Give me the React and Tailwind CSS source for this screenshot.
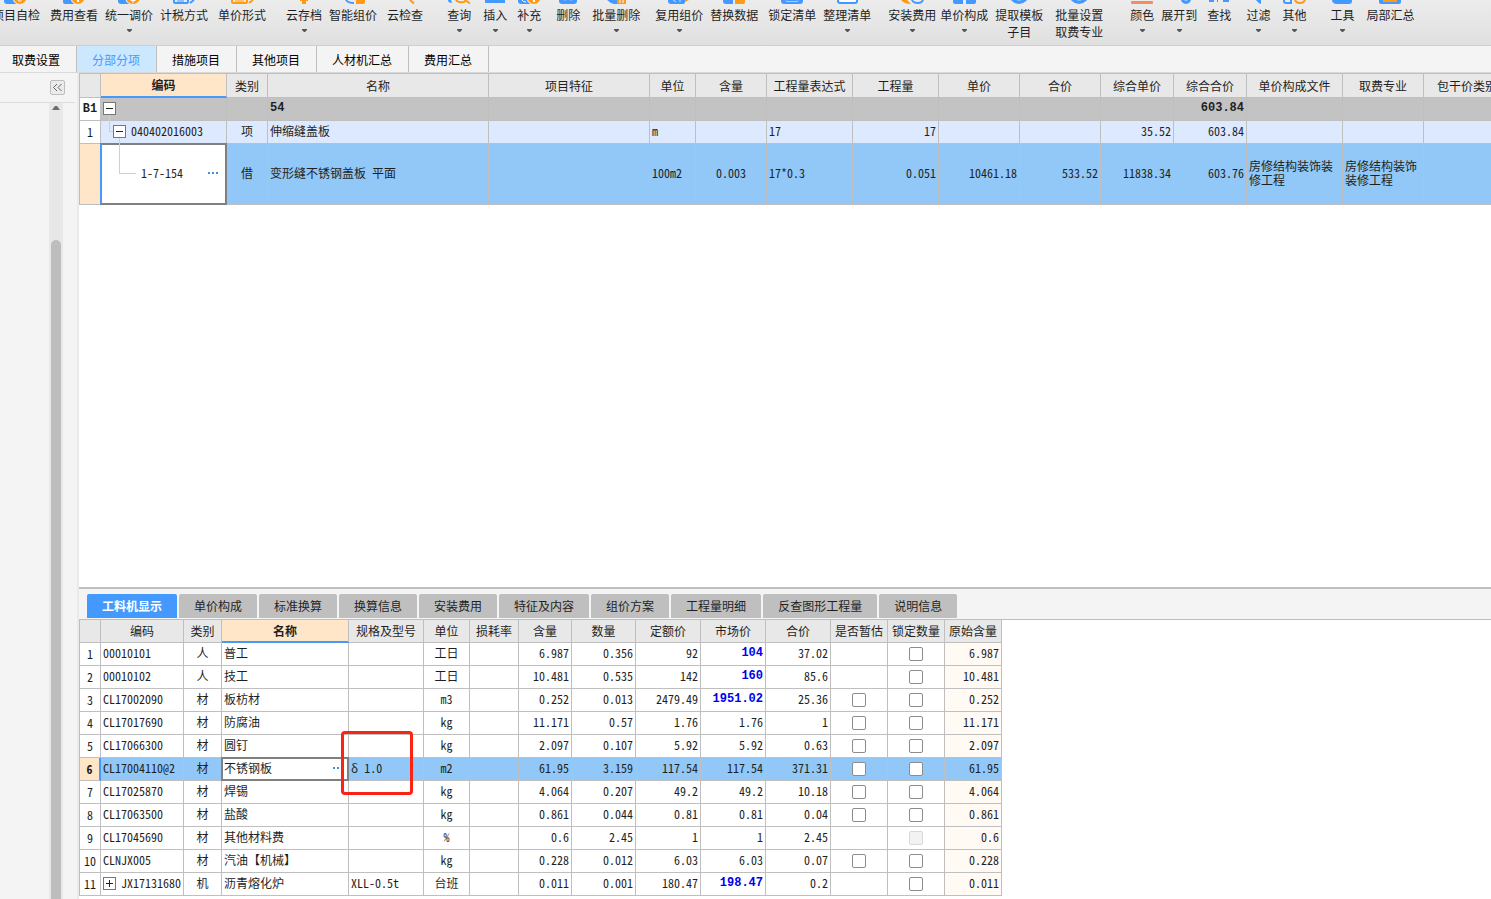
import React, { useState } from "react";
import clsx from "clsx";

const BLUE = "#4499ff";
const ORANGE = "#ff9a16";

const icons = {
  selfCheck: (
    <>
      <path d="M4 0h13v4H7q-3 0-3-3z" fill={BLUE} />
      <circle cx="20" cy="-2.5" r="7.5" fill="#ebebeb" />
      <circle cx="20" cy="-2.5" r="6.5" fill={ORANGE} />
      <path d="M18 0l2 1.5 3-3" stroke="#fff" fill="none" />
    </>
  ),
  feeView: (
    <>
      <path d="M5 0h13v4H7q-2 0-2-2z" fill={BLUE} />
      <circle cx="20" cy="-2.5" r="7.5" fill="#ebebeb" />
      <circle cx="20" cy="-2.5" r="6.5" fill={ORANGE} />
      <path d="M20 0v2" stroke="#fff" strokeWidth="2" />
    </>
  ),
  adjust: (
    <>
      <path d="M5 0h13v4H8q-3 0-3-3z" fill={BLUE} />
      <circle cx="20" cy="-3" r="8" fill="#ebebeb" />
      <circle cx="20" cy="-3" r="7" fill={ORANGE} />
      <path d="M17.5 0.5h5M20 0v3" stroke="#fff" />
    </>
  ),
  tax: (
    <>
      <path d="M6 0v2q0 1 1 1h12q1 0 1-1V0" stroke={BLUE} strokeWidth="2" fill="#dcebff" />
      <path d="M22 3l4-3" stroke={BLUE} strokeWidth="2" />
      <path d="M9 1h7" stroke={BLUE} />
    </>
  ),
  priceForm: (
    <>
      <path d="M6 0v2q0 1 1 1h13q1 0 1-1V0" stroke={ORANGE} strokeWidth="2" fill="#ffe7c6" />
      <path d="M23 3l4-3" stroke={ORANGE} strokeWidth="2" />
      <path d="M9 1h9" stroke={ORANGE} />
    </>
  ),
  cloudSave: <path d="M12 0h8v1h-2v3h-4V1h-2z" fill={ORANGE} />,
  smart: (
    <>
      <path d="M9 0q2 3 8 3" stroke={BLUE} strokeWidth="2" fill="none" />
      <path d="M19 0h9v2q0 2-2 2h-7z" fill={ORANGE} />
    </>
  ),
  cloudCheck: <path d="M21 0l4 3.500" stroke={ORANGE} strokeWidth="2" />,
  query: (
    <>
      <path d="M5 0h3l1 3q-4 0-4-3z" fill={BLUE} />
      <path d="M13 0q2 3 8 2l2-2M22 0l5 3.500" stroke={ORANGE} strokeWidth="2" fill="none" />
    </>
  ),
  insert: <path d="M6 0h20v3H6z" fill={BLUE} />,
  supplement: (
    <>
      <path d="M5 0h14v4H8q-3 0-3-3z" fill={BLUE} />
      <path d="M9 0q1 2 4 2" stroke="#fff" fill="none" />
      <circle cx="21" cy="-2.5" r="7.5" fill="#ebebeb" />
      <circle cx="21" cy="-2.5" r="6.5" fill={ORANGE} />
      <path d="M21 0v2" stroke="#fff" strokeWidth="2" />
    </>
  ),
  remove: (
    <>
      <path d="M7 0h18v1q0 3-3 3H10q-3 0-3-3z" fill={BLUE} />
      <path d="M13 0v1M19 0v1" stroke="#a9d0ff" />
    </>
  ),
  batchRemove: (
    <>
      <path d="M7 0h10v4h-3q-4-1-7-4z" fill={BLUE} />
      <path d="M17 0h9v4h-9z" fill={ORANGE} />
      <path d="M20 0v3M23 0v3" stroke="#fff" />
    </>
  ),
  reuse: (
    <>
      <path d="M5 0h17v2q0 2-2 2H8q-3 0-3-3z" fill={BLUE} />
      <path d="M10 0l3 2M17 0v2" stroke="#bcdcff" />
      <path d="M22 0h4l-4 2z" fill={ORANGE} />
    </>
  ),
  replace: (
    <>
      <path d="M5 0h10v4H8q-3 0-3-3z" fill={BLUE} />
      <path d="M17 0h10v2q0 2-2 2h-8z" fill={ORANGE} />
    </>
  ),
  lock: (
    <>
      <path d="M5 0h22v1q0 3-3 3H8q-3 0-3-3z" fill={BLUE} />
      <path d="M10 0.500q0 1 1 1h10q1 0 1-1" stroke="#a9d0ff" fill="none" />
    </>
  ),
  tidy: <path d="M7 0v1q0 2 2 2h15q2 0 2-2V0" stroke={BLUE} strokeWidth="2" fill="#fff" />,
  install: (
    <>
      <path d="M5 0h6l4 4q-7 0-10-4z" fill={ORANGE} />
      <path d="M16 0q1 3 6 3 4 0 5-3" stroke={BLUE} strokeWidth="2" fill="none" />
    </>
  ),
  compose: (
    <>
      <path d="M5 0h10v4H7q-2 0-2-2z" fill={BLUE} />
      <path d="M18 0h10v2q0 2-2 2h-8z" fill={BLUE} />
    </>
  ),
  disc: (
    <>
      <circle cx="16" cy="-6" r="10" fill={BLUE} />
      <path d="M14 0.500h4" stroke="#7db8ff" fill="none" />
    </>
  ),
  color: <rect x="5" y="1" width="22" height="3" rx="1" fill="#f58a63" />,
  expand: (
    <>
      <circle cx="23" cy="-1" r="5" fill={BLUE} />
      <circle cx="23" cy="-1" r="2" fill="#9ccaff" />
    </>
  ),
  find: <path d="M6 0h5v2H6zM14 0h1v2h-1zM20 0h6v2h-6z" fill={BLUE} />,
  filter: <path d="M14 0h5v4q-3-1-5-4z" fill={BLUE} />,
  other: (
    <>
      <path d="M6 0v1q0 2 2 2h5V0" stroke={BLUE} strokeWidth="2" fill="none" />
      <path d="M17 0q1 3 5 3t5-3" stroke={ORANGE} strokeWidth="2" fill="none" />
    </>
  ),
  tools: <path d="M6 0h20v1q0 3-3 3H10q-4-1-4-4z" fill={BLUE} />,
  partial: (
    <>
      <path d="M5 0h22v2q0 2-2 2H7q-2 0-2-2z" fill={BLUE} />
      <path d="M9 0h14v2H9z" fill={ORANGE} />
    </>
  ),
};

const tools = [
  { text: "项目自检", icon: "selfCheck", gap: "-ml-2" },
  { text: "费用查看", icon: "feeView", gap: "ml-[10px]" },
  { text: "统一调价", icon: "adjust", gap: "ml-[7px]", menu: true },
  { text: "计税方式", icon: "tax", gap: "ml-[7px]" },
  { text: "单价形式", icon: "priceForm", gap: "ml-[10px]" },
  { text: "云存档", icon: "cloudSave", gap: "ml-5", menu: true },
  { text: "智能组价", icon: "smart", gap: "ml-[7px]" },
  { text: "云检查", icon: "cloudCheck", gap: "ml-[10px]" },
  { text: "查询", icon: "query", gap: "ml-6", menu: true },
  { text: "插入", icon: "insert", gap: "ml-3", menu: true },
  { text: "补充", icon: "supplement", gap: "ml-[10px]", menu: true },
  { text: "删除", icon: "remove", gap: "ml-[15px]" },
  { text: "批量删除", icon: "batchRemove", gap: "ml-3", menu: true },
  { text: "复用组价", icon: "reuse", gap: "ml-[15px]", menu: true },
  { text: "替换数据", icon: "replace", gap: "ml-[7px]" },
  { text: "锁定清单", icon: "lock", gap: "ml-[10px]" },
  { text: "整理清单", icon: "tidy", gap: "ml-[7px]", menu: true },
  { text: "安装费用", icon: "install", gap: "ml-[17px]", menu: true },
  { text: "单价构成", icon: "compose", gap: "ml-1", menu: true },
  { text: "提取模板", second: "子目", icon: "disc", gap: "ml-[7px]" },
  { text: "批量设置", second: "取费专业", icon: "disc", gap: "ml-3" },
  { text: "颜色", icon: "color", gap: "ml-[27px]", menu: true },
  { text: "展开到", icon: "expand", gap: "ml-[7px]", menu: true },
  { text: "查找", icon: "find", gap: "ml-[10px]" },
  { text: "过滤", icon: "filter", gap: "ml-[15px]", menu: true },
  { text: "其他", icon: "other", gap: "ml-3", menu: true },
  { text: "工具", icon: "tools", gap: "ml-6", menu: true },
  { text: "局部汇总", icon: "partial", gap: "ml-3" },
];

const pageTabs = ["分部分项", "措施项目", "其他项目", "人材机汇总", "费用汇总"];

const topCols = [
  { title: "", w: "w-[21px]" },
  { title: "编码", w: "w-[126px]" },
  { title: "类别", w: "w-[41px]", align: "text-center" },
  { title: "名称", w: "w-[221px]" },
  { title: "项目特征", w: "w-[161px]" },
  { title: "单位", w: "w-[46px]" },
  { title: "含量", w: "w-[71px]", align: "text-center" },
  { title: "工程量表达式", w: "w-[86px]" },
  { title: "工程量", w: "w-[86px]", align: "text-right" },
  { title: "单价", w: "w-[81px]", align: "text-right" },
  { title: "合价", w: "w-[81px]", align: "text-right" },
  { title: "综合单价", w: "w-[73px]", align: "text-right" },
  { title: "综合合价", w: "w-[73px]", align: "text-right" },
  { title: "单价构成文件", w: "w-[96px]" },
  { title: "取费专业", w: "w-[81px]" },
  { title: "包干价类别", w: "w-[87px]" },
];

const topRows = [
  ["", "54", "", "", "", "", "", "", "", "", "603.84", "", "", ""],
  ["项", "伸缩缝盖板", "", "m", "", "17", "17", "", "", "35.52", "603.84", "", "", ""],
  ["借", "变形缝不锈钢盖板 平面", "", "100m2", "0.003", "17*0.3", "0.051", "10461.18", "533.52", "11838.34", "603.76", "房修结构装饰装修工程", "房修结构装饰装修工程", ""],
];

const detailTabs = ["工料机显示", "单价构成", "标准换算", "换算信息", "安装费用", "特征及内容", "组价方案", "工程量明细", "反查图形工程量", "说明信息"];

const detailCols = [
  { title: "", w: "w-[21px]" },
  { title: "编码", w: "w-[83px]" },
  { title: "类别", w: "w-[38px]" },
  { title: "名称", w: "w-[127px]" },
  { title: "规格及型号", w: "w-[75px]" },
  { title: "单位", w: "w-[46px]" },
  { title: "损耗率", w: "w-[49px]" },
  { title: "含量", w: "w-[53px]" },
  { title: "数量", w: "w-[64px]" },
  { title: "定额价", w: "w-[65px]" },
  { title: "市场价", w: "w-[65px]" },
  { title: "合价", w: "w-[65px]" },
  { title: "是否暂估", w: "w-[57px]" },
  { title: "锁定数量", w: "w-[57px]" },
  { title: "原始含量", w: "w-[57px]" },
];

const details = [
  { code: "00010101", type: "人", name: "普工", unit: "工日", amount: "6.987", qty: "0.356", quota: "92", market: "104", total: "37.02", changed: true },
  { code: "00010102", type: "人", name: "技工", unit: "工日", amount: "10.481", qty: "0.535", quota: "142", market: "160", total: "85.6", changed: true },
  { code: "CL17002090", type: "材", name: "板枋材", unit: "m3", amount: "0.252", qty: "0.013", quota: "2479.49", market: "1951.02", total: "25.36", changed: true, estimate: true },
  { code: "CL17017690", type: "材", name: "防腐油", unit: "kg", amount: "11.171", qty: "0.57", quota: "1.76", market: "1.76", total: "1", estimate: true },
  { code: "CL17066300", type: "材", name: "圆钉", unit: "kg", amount: "2.097", qty: "0.107", quota: "5.92", market: "5.92", total: "0.63", estimate: true },
  { code: "CL17004110@2", type: "材", name: "不锈钢板", spec: "δ 1.0", unit: "m2", amount: "61.95", qty: "3.159", quota: "117.54", market: "117.54", total: "371.31", estimate: true, selected: true },
  { code: "CL17025870", type: "材", name: "焊锡", unit: "kg", amount: "4.064", qty: "0.207", quota: "49.2", market: "49.2", total: "10.18", estimate: true },
  { code: "CL17063500", type: "材", name: "盐酸", unit: "kg", amount: "0.861", qty: "0.044", quota: "0.81", market: "0.81", total: "0.04", estimate: true },
  { code: "CL17045690", type: "材", name: "其他材料费", unit: "%", amount: "0.6", qty: "2.45", quota: "1", market: "1", total: "2.45", lockDisabled: true },
  { code: "CLNJX005", type: "材", name: "汽油【机械】", unit: "kg", amount: "0.228", qty: "0.012", quota: "6.03", market: "6.03", total: "0.07", estimate: true },
  { code: "JX17131680", type: "机", name: "沥青熔化炉", spec: "XLL-0.5t", unit: "台班", amount: "0.011", qty: "0.001", quota: "180.47", market: "198.47", total: "0.2", changed: true, expandable: true },
];

const cell = "border-r border-b border-[#bfbfbf] px-0.5 pb-0.5";
const boldNum = "font-['Liberation_Mono','Noto_Sans_CJK_SC',monospace] font-bold";

function Tool({ tool }) {
  return (
    <button className={clsx("flex shrink-0 flex-col items-center whitespace-nowrap", tool.gap)}>
      <svg width="32" height="6" viewBox="0 0 32 6" className="-mx-1 overflow-hidden">
        {icons[tool.icon]}
      </svg>
      <span className="leading-[17px]">{tool.text}</span>
      {tool.second && <span className="leading-[17px]">{tool.second}</span>}
      {tool.menu && (
        <svg width="5" height="3" viewBox="0 0 5 3" className="mt-1.5">
          <path d="M0 0h5v1L3 3H2L0 1z" fill="#555" />
        </svg>
      )}
    </button>
  );
}

function TreeBox({ open, label }) {
  return (
    <button aria-label={label} className="relative flex size-[13px] shrink-0 items-center justify-center border border-[#777] bg-white">
      <svg width="9" height="9" viewBox="0 0 9 9">
        <path d={open ? "M1 4.500h7" : "M1 4.500h7M4.500 1v7"} stroke="#222" />
      </svg>
    </button>
  );
}

function Dots({ label }) {
  return (
    <button aria-label={label} className="flex shrink-0 gap-0.5">
      <span className="size-0.5 bg-[#3f8fdc]"></span>
      <span className="size-0.5 bg-[#3f8fdc]"></span>
      <span className="size-0.5 bg-[#3f8fdc]"></span>
    </button>
  );
}

function EditFrame() {
  return <span className="pointer-events-none absolute -inset-px border-2 border-[#808080] border-l-[#4499ff]"></span>;
}

function HeadRow({ cols, active, height }) {
  return (
    <tr className={height}>
      {cols.map((c, i) => (
        <th
          key={i}
          scope="col"
          className={clsx(
            "overflow-hidden border-r border-b border-[#bfbfbf] whitespace-nowrap",
            c.w,
            c.title === active ? "border-b-2 border-b-[#4499ff] bg-[#ffe6c8] font-bold" : "bg-[#e8e8e8] font-normal"
          )}
        >
          {c.title}
        </th>
      ))}
    </tr>
  );
}

function CheckCell({ label, show, disabled }) {
  return (
    <td className="border-r border-b border-[#bfbfbf]">
      {show && (
        <input
          type="checkbox"
          aria-label={label}
          disabled={disabled}
          className="mx-auto block size-3.5 appearance-none rounded-xs border border-[#8c8c8c] bg-white checked:bg-[#4499ff] disabled:border-[#d8d8d8] disabled:bg-[#f2f2f2]"
        />
      )}
    </td>
  );
}

function BudgetTable() {
  const [code, setCode] = useState("1-7-154");

  function renderCells(row) {
    return row.map((v, i) => (
      <td key={i} className={clsx(cell, topCols[i + 2].align)}>
        {v}
      </td>
    ));
  }

  return (
    <table className="w-[1432px] table-fixed border-separate border-spacing-0 border-t border-l border-[#bfbfbf]">
      <thead>
        <HeadRow cols={topCols} active="编码" height="h-6" />
      </thead>
      <tbody>
        <tr className={clsx("h-[23px] bg-[#c3c3c3]", boldNum)}>
          <th scope="row" className="border-r border-b border-[#bfbfbf] bg-white text-center">B1</th>
          <td className={cell}>
            <TreeBox open label="收起 B1" />
          </td>
          {renderCells(topRows[0])}
        </tr>
        <tr className="h-[23px] bg-[#dce9ff]">
          <th scope="row" className="border-r border-b border-[#bfbfbf] bg-white font-normal">1</th>
          <td className={clsx(cell, "relative")}>
            <span className="absolute -top-1.5 left-2 h-[17px] w-1 border-b border-l border-[#f7c88c]"></span>
            <div className="flex items-center gap-[5px] pl-[10px]">
              <TreeBox open label="收起 040402016003" />
              <span>040402016003</span>
            </div>
          </td>
          {renderCells(topRows[1])}
        </tr>
        <tr className="h-[61px] bg-[#92c8f7] leading-[14px]">
          <th scope="row" className="border-r border-b border-[#bfbfbf] bg-[#ffe6c8]"></th>
          <td className={clsx(cell, "relative bg-white")}>
            <EditFrame />
            <span className="absolute -top-1.5 left-[18px] h-9 w-[17px] border-b border-l border-[#f7c88c]"></span>
            <div className="flex items-center pr-1.5 pl-[38px]">
              <input
                aria-label="编码"
                value={code}
                onChange={(e) => setCode(e.target.value)}
                className="w-full min-w-0 bg-transparent outline-none"
              />
              <Dots label="选择编码" />
            </div>
          </td>
          {renderCells(topRows[2])}
        </tr>
      </tbody>
    </table>
  );
}

function DetailTable() {
  const [name, setName] = useState("不锈钢板");

  return (
    <table className="w-[923px] table-fixed border-separate border-spacing-0 border-l border-[#bfbfbf]">
      <thead>
        <HeadRow cols={detailCols} active="名称" height="h-[23px]" />
      </thead>
      <tbody>
        {details.map((d, i) => (
          <tr key={d.code} className={clsx("h-[23px] text-right", d.selected ? "bg-[#92c8f7]" : "bg-white")}>
            <th
              scope="row"
              className={clsx(
                "border-b border-[#bfbfbf] text-center",
                d.selected ? "border-r-2 border-r-[#4499ff] bg-[#ffe6c8] font-bold" : "border-r font-normal"
              )}
            >
              {i + 1}
            </th>
            <td className={clsx(cell, "text-left whitespace-nowrap")}>
              {d.expandable ? (
                <div className="flex items-center gap-[5px]">
                  <TreeBox label={"展开 " + d.code} />
                  <span>{d.code}</span>
                </div>
              ) : (
                d.code
              )}
            </td>
            <td className={clsx(cell, "text-center")}>{d.type}</td>
            {d.selected ? (
              <td className={clsx(cell, "relative bg-white")}>
                <span className="pointer-events-none absolute -inset-px border-2 border-[#808080]"></span>
                <div className="flex items-center pr-[3px]">
                  <input
                    aria-label="名称"
                    value={name}
                    onChange={(e) => setName(e.target.value)}
                    className="w-full min-w-0 bg-transparent outline-none"
                  />
                  <Dots label="选择名称" />
                </div>
              </td>
            ) : (
              <td className={clsx(cell, "text-left")}>{d.name}</td>
            )}
            <td className={clsx(cell, "text-left", d.selected && "relative")}>
              {d.spec}
              {d.selected && (
                <span className="pointer-events-none absolute -top-[27px] -left-2 z-10 h-16 w-18 rounded-sm border-3 border-[#fb2313]"></span>
              )}
            </td>
            <td className={clsx(cell, "text-center")}>{d.unit}</td>
            <td className={cell}></td>
            <td className={cell}>{d.amount}</td>
            <td className={cell}>{d.qty}</td>
            <td className={cell}>{d.quota}</td>
            <td className={clsx(cell, d.changed && boldNum, d.changed && "text-[#0000ee]")}>{d.market}</td>
            <td className={cell}>{d.total}</td>
            <CheckCell label={d.name + " 是否暂估"} show={d.estimate} />
            <CheckCell label={d.name + " 锁定数量"} show disabled={d.lockDisabled} />
            <td className={clsx(cell, !d.selected && "bg-[#fffaf4]")}>{d.amount}</td>
          </tr>
        ))}
      </tbody>
    </table>
  );
}

function App() {
  const [page, setPage] = useState("分部分项");
  const [tab, setTab] = useState("工料机显示");

  return (
    <div className="flex h-screen flex-col overflow-hidden bg-[#f4f4f4] font-['Noto_Sans_CJK_SC',sans-serif] text-xs text-[#1f1f1f]">
      <header className="flex h-[46px] shrink-0 items-start overflow-hidden border-b border-[#cfcfcf] bg-linear-to-b from-[#ececec] to-[#e0e0e0]">
        {tools.map((t) => (
          <Tool key={t.text} tool={t} />
        ))}
      </header>

      <nav className="flex h-[27px] shrink-0 border-b border-[#d9d9d9] text-black">
        <button className="border-r border-[#bfbfbf] pt-0.5 pr-4 pl-3">取费设置</button>
        {pageTabs.map((t) => (
          <button
            key={t}
            onClick={() => setPage(t)}
            className={clsx(
              "border-r border-[#bfbfbf] pt-0.5 pr-4 pl-[15px]",
              page === t && "bg-[#cce8ff] text-[#4499ff]"
            )}
          >
            {t}
          </button>
        ))}
      </nav>

      <div className="flex min-h-0 flex-1">
        <aside className="flex w-[79px] shrink-0 flex-col border-r-2 border-[#eaeaea]">
          <div className="mr-0.5 flex h-[30px] shrink-0 items-center justify-end border-b border-[#dcdcdc] pr-[10px]">
            <button aria-label="收起" className="flex size-[15px] items-center justify-center rounded-xs border border-[#bdbdbd] bg-[#ebebeb]">
              <svg width="11" height="9" viewBox="0 0 11 9" fill="none" stroke="#666">
                <path d="M5 1L1.500 4.500 5 8M9.500 1L6 4.500 9.500 8" />
              </svg>
            </button>
          </div>
          <div className="ml-[49px] flex w-3.5 flex-1 flex-col items-center bg-[#e7e7e7]">
            <svg width="8" height="4" viewBox="0 0 8 4" className="mt-[3px] shrink-0">
              <path d="M3 0h2l3 4H0z" fill="#6b6b73" />
            </svg>
            <div className="mt-[130px] w-[10px] flex-1 rounded-t-full bg-[#bdbdbd]"></div>
          </div>
        </aside>

        <main className="flex min-w-0 flex-1 flex-col bg-white [font-feature-settings:'hwid']">
          <section className="min-h-0 flex-1 overflow-hidden">
            <BudgetTable />
          </section>

          <section className="shrink-0 overflow-hidden border-t-2 border-[#bfbfbf] pb-[3px]">
            <div className="flex gap-0.5 border-b border-[#bfbfbf] bg-[#f4f4f4] pt-[5px] pb-px pl-2">
              {detailTabs.map((t) => (
                <button
                  key={t}
                  onClick={() => setTab(t)}
                  className={clsx(
                    "h-6 rounded-t-xs px-[15px]",
                    tab === t ? "bg-[#4499ff] font-bold text-white" : "bg-[#bfbfbf]"
                  )}
                >
                  {t}
                </button>
              ))}
            </div>
            <DetailTable />
          </section>
        </main>
      </div>
    </div>
  );
}

export default App;
